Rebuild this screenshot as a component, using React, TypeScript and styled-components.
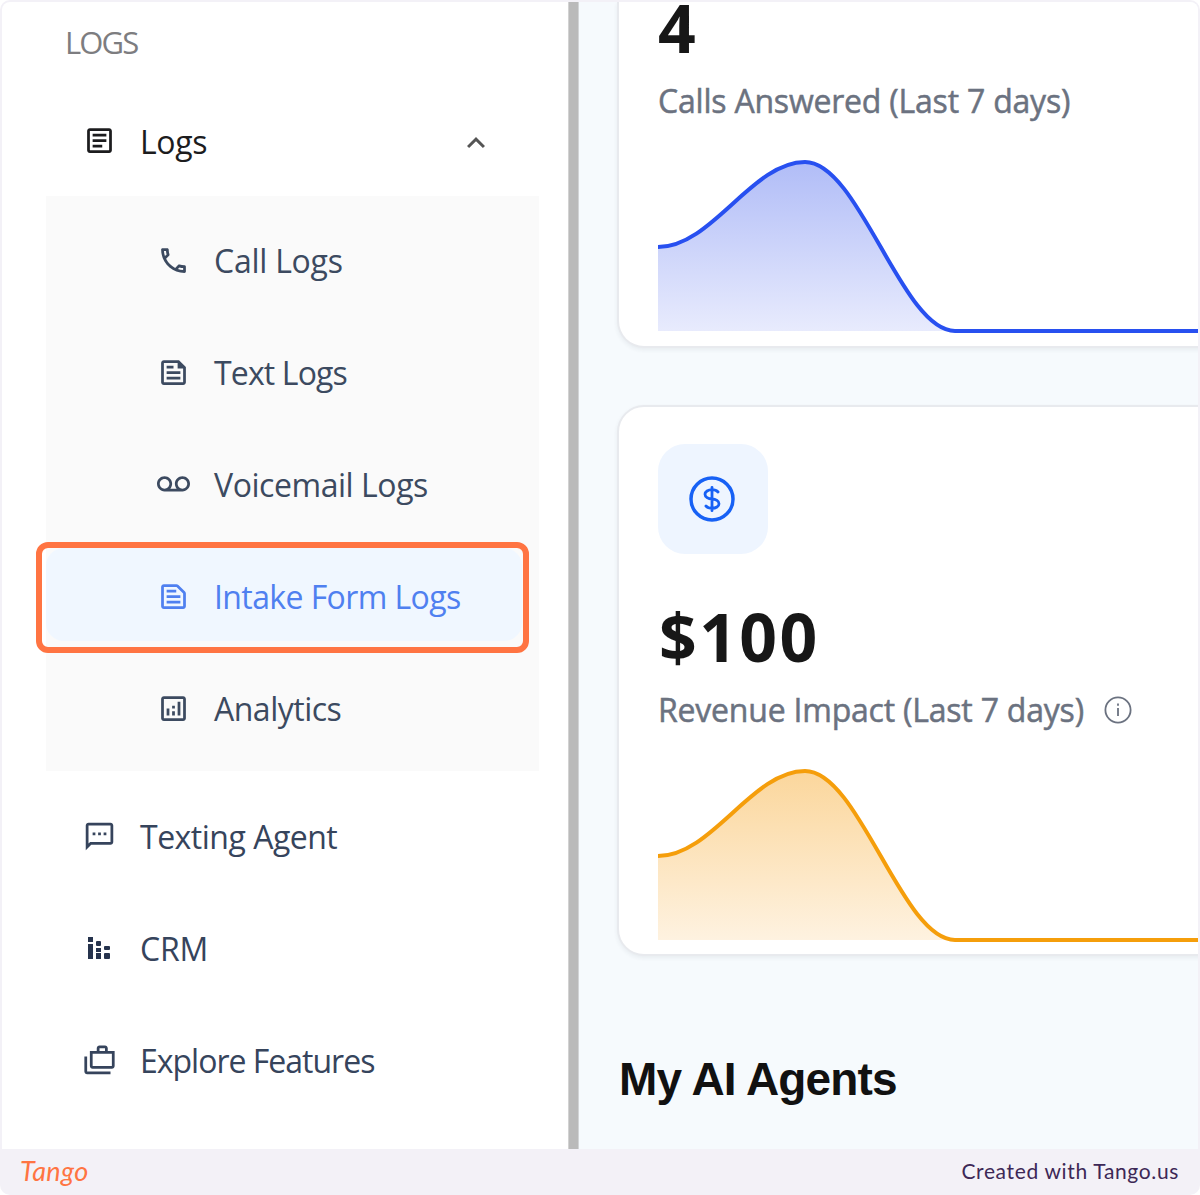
import React from 'react';
import styled, { createGlobalStyle } from 'styled-components';
import {
  MdOutlineArticle,
  MdOutlinePhone,
  MdOutlineFeed,
  MdVoicemail,
  MdOutlineTextSnippet,
  MdOutlineAnalytics,
  MdOutlineSms,
  MdOutlineCases,
  MdKeyboardArrowUp,
} from 'react-icons/md';

const UI_FONT = '"Open Sans", "Noto Sans", sans-serif';

const GlobalStyle = createGlobalStyle`
  *, *::before, *::after { box-sizing: border-box; }
  body { margin: 0; background: #fff; }
`;

const Frame = styled.div`
  display: flex;
  flex-direction: column;
  width: 1200px;
  height: 1195px;
  padding: 2px 2px 0;
  border-radius: 10px;
  background: #f3f1f7;
  overflow: hidden;
  font-family: ${UI_FONT};
`;

const Shot = styled.div`
  display: flex;
  height: 1147px;
  border-radius: 8px 8px 0 0;
  overflow: hidden;
  background: #fff;
`;

const Sidebar = styled.nav`
  flex: none;
  width: 566px;
  padding: 0 29px 0 44px;
`;

const SectionTitle = styled.div`
  height: 82px;
  padding: 17px 0 0 19px;
  font-size: 31px;
  line-height: 46px;
  letter-spacing: -1.9px;
  color: #7d7d80;
`;

const NavRow = styled.div<{ $color?: string }>`
  display: flex;
  align-items: center;
  height: 112px;
  padding: 0 45px 0 36px;
  color: ${(p) => p.$color ?? '#36445c'};
`;

const IconSlot = styled.span<{ $lift?: number }>`
  display: flex;
  justify-content: center;
  width: 34px;
  margin-right: 24px;
  padding-top: ${(p) => p.$lift ?? 3}px;
  font-size: 33px;
`;

const ChevronSlot = styled.span`
  display: flex;
  padding-top: 6px;
`;

const Label = styled.span<{ $spacing: number }>`
  flex: 1;
  padding-top: 4px;
  font-size: 32px;
  line-height: 44px;
  white-space: nowrap;
  letter-spacing: ${(p) => p.$spacing}px;
`;

const Submenu = styled.div`
  margin-bottom: 8px;
  padding: 8px 0;
  background: #fafafa;
`;

const SubRow = styled.div`
  position: relative;
  display: flex;
  height: 111.8px;
  padding: 9px 17px 10px 0;
`;

const SubLink = styled.div<{ $active?: boolean }>`
  display: flex;
  flex: 1;
  align-items: center;
  padding-left: 110px;
  border-radius: 18px;
  color: ${(p) => (p.$active ? '#4f80f0' : '#3c4a60')};
  background: ${(p) => (p.$active ? '#f0f7ff' : 'transparent')};
`;

const Highlight = styled.div`
  position: absolute;
  left: -10px;
  top: 3px;
  width: 493px;
  height: 111px;
  border: 6px solid #ff7442;
  border-radius: 12px;
`;

const Divider = styled.div`
  flex: none;
  width: 11px;
  background: #bababa;
  border-left: 1px solid #d2d2d2;
  border-right: 1px solid #d2d4d6;
`;

const Main = styled.main`
  flex: 1;
  min-width: 0;
  padding-left: 38px;
  background: #f6fafd;
  overflow: hidden;
`;

const Card = styled.section<{ $first?: boolean }>`
  display: flex;
  flex-direction: column;
  width: 640px;
  height: ${(p) => (p.$first ? 346 : 551)}px;
  margin-bottom: 57px;
  padding: ${(p) => (p.$first ? '0' : '37px')} 0 0 39px;
  border: 2px solid #e8eaee;
  border-top-width: ${(p) => (p.$first ? 0 : 2)}px;
  border-radius: ${(p) => (p.$first ? '0 0 27px 27px' : '27px')};
  background: #fff;
  box-shadow: 0 2px 4px rgba(40, 50, 70, 0.07);
`;

const IconTile = styled.div`
  display: flex;
  align-items: center;
  justify-content: center;
  width: 110px;
  height: 110px;
  margin-bottom: 37px;
  padding-right: 2px;
  border-radius: 27px;
  background: #eef5ff;
`;

const Figure = styled.div<{ $first?: boolean }>`
  height: ${(p) => (p.$first ? 77 : 97)}px;
  padding-left: ${(p) => (p.$first ? 0 : 1)}px;
  font-size: 66px;
  line-height: ${(p) => (p.$first ? 50 : 90)}px;
  font-weight: 700;
  letter-spacing: 2.4px;
  color: #171717;
`;

const Caption = styled.div`
  display: flex;
  align-items: center;
  gap: 20px;
  height: 44px;
  font-size: 32px;
  line-height: 44px;
  font-weight: 500;
  white-space: nowrap;
  letter-spacing: -0.21px;
  color: #6b7280;
  -webkit-text-stroke: 0.5px #6b7280;
`;

const Chart = styled.svg`
  display: block;
  flex: none;
  width: 600px;
  height: 180px;
  margin-top: 37px;
`;

const Heading = styled.h2`
  margin: 0;
  padding: 40px 0 0 2px;
  font-family: "Liberation Sans", Arial, sans-serif;
  font-size: 46px;
  line-height: 52px;
  font-weight: 700;
  letter-spacing: -0.85px;
  color: #111;
`;

const Footer = styled.footer`
  display: flex;
  align-items: center;
  justify-content: space-between;
  height: 46px;
  padding: 0 19px 2px 18px;
`;

const Brand = styled.span`
  font-family: Lato, sans-serif;
  font-size: 27px;
  font-style: italic;
  font-weight: 400;
  line-height: 32px;
  letter-spacing: 0.4px;
  color: #ff7442;
`;

const Credit = styled.span`
  font-family: Lato, sans-serif;
  font-size: 21px;
  line-height: 28px;
  letter-spacing: 0.65px;
  color: #3d2856;
`;

function StackedBarsIcon() {
  return (
    <svg width="24" height="24" viewBox="0 0 24 24" fill="#26334d">
      <rect x="1" y="0" width="5" height="5" />
      <rect x="1" y="7" width="5" height="15" />
      <rect x="9" y="4" width="5" height="5" rx="1" />
      <rect x="9" y="11" width="5" height="4" />
      <rect x="9" y="16" width="5" height="6" />
      <rect x="17" y="9" width="6" height="4" rx="1" />
      <rect x="17" y="16" width="6" height="6" rx="1" />
    </svg>
  );
}

function DollarIcon() {
  return (
    <svg width="56" height="56" viewBox="0 0 24 24" fill="none" stroke="#1761f5" strokeWidth="1.5" strokeLinecap="round">
      <circle cx="12" cy="12" r="9" />
      <path strokeWidth="1.2" d="M12 8c-1.657 0-3 .895-3 2s1.343 2 3 2 3 .895 3 2-1.343 2-3 2m0-8c1.11 0 2.08.402 2.599 1M12 8V7m0 1v8m0 0v1m0-1c-1.11 0-2.08-.402-2.599-1" />
    </svg>
  );
}

function InfoIcon() {
  return (
    <svg width="28" height="28" viewBox="0 0 28 28" fill="none" stroke="#6b7280" strokeWidth="1.8">
      <circle cx="14" cy="14" r="12.6" />
      <path d="M14 12v8M14 7.5v2.2" />
    </svg>
  );
}

const CURVE = 'M0 87C54 87 94 2 147 2C201 2 244 171 297 171H600';

function Trend({ id, color, from, to }: { id: string; color: string; from: string; to: string }) {
  return (
    <Chart viewBox="0 0 600 180">
      <defs>
        <linearGradient id={id} gradientUnits="userSpaceOnUse" x1="0" y1="0" x2="0" y2="171">
          <stop offset="0" stopColor={from} />
          <stop offset="1" stopColor={to} />
        </linearGradient>
      </defs>
      <path d={`${CURVE}H0Z`} fill={`url(#${id})`} />
      <path d={CURVE} fill="none" stroke={color} strokeWidth="4" />
    </Chart>
  );
}

const subItems = [
  { label: 'Call Logs', Icon: MdOutlinePhone, spacing: -0.25 },
  { label: 'Text Logs', Icon: MdOutlineFeed, spacing: -0.85 },
  { label: 'Voicemail Logs', Icon: MdVoicemail, spacing: -0.45 },
  { label: 'Intake Form Logs', Icon: MdOutlineTextSnippet, spacing: -0.6, active: true },
  { label: 'Analytics', Icon: MdOutlineAnalytics, spacing: -0.5 },
];

const lowerItems = [
  { label: 'Texting Agent', Icon: MdOutlineSms, spacing: -0.5 },
  { label: 'CRM', Icon: StackedBarsIcon, spacing: -0.2 },
  { label: 'Explore Features', Icon: MdOutlineCases, spacing: -1 },
];

export default function App() {
  return (
    <>
      <GlobalStyle />
      <Frame>
        <Shot>
          <Sidebar>
            <SectionTitle>LOGS</SectionTitle>
            <NavRow $color="#1c1c1e">
              <IconSlot $lift={0}>
                <MdOutlineArticle />
              </IconSlot>
              <Label $spacing={-0.4}>Logs</Label>
              <ChevronSlot>
                <MdKeyboardArrowUp size={36} color="#555" />
              </ChevronSlot>
            </NavRow>
            <Submenu>
              {subItems.map(({ label, Icon, spacing, active }) => (
                <SubRow key={label}>
                  <SubLink $active={active}>
                    <IconSlot>
                      <Icon />
                    </IconSlot>
                    <Label $spacing={spacing}>{label}</Label>
                  </SubLink>
                  {active && <Highlight />}
                </SubRow>
              ))}
            </Submenu>
            {lowerItems.map(({ label, Icon, spacing }) => (
              <NavRow key={label}>
                <IconSlot $lift={4}>
                  <Icon />
                </IconSlot>
                <Label $spacing={spacing}>{label}</Label>
              </NavRow>
            ))}
          </Sidebar>
          <Divider />
          <Main>
            <Card $first>
              <Figure $first>4</Figure>
              <Caption>Calls Answered (Last 7 days)</Caption>
              <Trend id="calls" color="#2850f0" from="#b0bcf7" to="#e8ebfd" />
            </Card>
            <Card>
              <IconTile>
                <DollarIcon />
              </IconTile>
              <Figure>$100</Figure>
              <Caption>
                Revenue Impact (Last 7 days)
                <InfoIcon />
              </Caption>
              <Trend id="revenue" color="#f59e0b" from="#fbd69b" to="#fef2e0" />
            </Card>
            <Heading>My AI Agents</Heading>
          </Main>
        </Shot>
        <Footer>
          <Brand>Tango</Brand>
          <Credit>Created with Tango.us</Credit>
        </Footer>
      </Frame>
    </>
  );
}
